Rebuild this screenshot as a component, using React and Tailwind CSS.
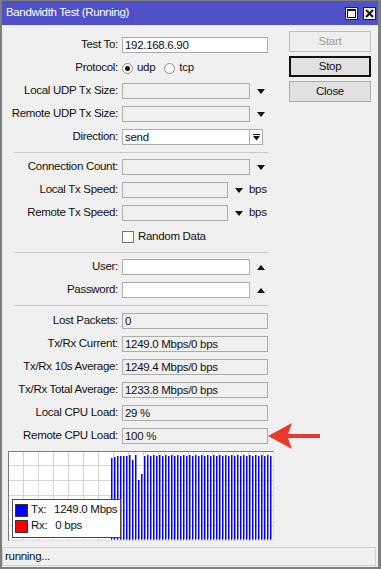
import React from 'react';

const Label = ({ children }) => (
  <div className="w-[116px] shrink-0 text-right">{children}</div>
);

const Row = ({ label, children }) => (
  <div className="flex h-[16px] items-center">
    <Label>{label}</Label>
    <div className="ml-[4px] flex h-full items-center">{children}</div>
  </div>
);

const Field = ({ w = 'w-[146px]', white, value }) => (
  <div
    className={`${w} h-[16px] border border-[#acacac] pl-[2px] leading-[14px] ${
      white ? 'bg-white' : 'bg-[#f0f0f0]'
    }`}
  >
    {value}
  </div>
);

const Down = ({ ml = 'ml-[7px]' }) => (
  <svg className={`${ml} shrink-0`} width="8" height="5" viewBox="0 0 8 5">
    <path d="M0 0H8L4 5Z" fill="#111" />
  </svg>
);

const Up = () => (
  <svg className="ml-[7px] shrink-0" width="8" height="5" viewBox="0 0 8 5">
    <path d="M0 5H8L4 0Z" fill="#111" />
  </svg>
);

const Separator = () => <div className="ml-[12px] h-px w-[254px] bg-[#c9c9c9]" />;

const Radio = ({ checked, label }) => (
  <div className="flex items-center">
    <div className="flex h-[11px] w-[11px] items-center justify-center rounded-full border border-[#8a8a8a] bg-white">
      {checked && <div className="h-[5px] w-[5px] rounded-full bg-[#111]" />}
    </div>
    <span className="ml-[4px]">{label}</span>
  </div>
);

// bar tops (px from chart top) for the first samples, rest near full scale
const tops = [6, 5, 4, 4, 4, 4, 3, 8, 3, 28, 22];

const Graph = () => {
  const bars = [];
  for (let i = 0; i < 54; i++) {
    const top = i < tops.length ? tops[i] : i % 2 ? 4 : 3;
    bars.push(<rect key={i} x={102 + 3 * i} y={top} width="1.5" height={87 - top} fill="#0000ff" />);
  }
  const vlines = [];
  for (let x = 14; x < 264; x += 15) vlines.push(<line key={'v' + x} x1={x + 0.5} y1="0" x2={x + 0.5} y2="88" stroke="#d4d4d4" />);
  const hlines = [];
  for (let y = 13; y < 88; y += 15) hlines.push(<line key={'h' + y} x1="0" y1={y + 0.5} x2="264" y2={y + 0.5} stroke="#d4d4d4" />);
  return (
    <div className="relative ml-[6px] mt-[7px] h-[90px] w-[266px] border-t border-l border-[#7a7a7a] border-r border-b border-r-[#dcdcdc] border-b-[#dcdcdc] bg-white">
      <svg width="264" height="88" viewBox="0 0 264 88" className="block">
        {vlines}
        {hlines}
        {bars}
        <line x1="102" y1="87.5" x2="264" y2="87.5" stroke="#ff0000" strokeDasharray="1 2" />
      </svg>
      <div className="absolute left-[3px] top-[47px] h-[39px] w-[109px] border border-[#4a4a4a] bg-white px-[2px] pt-[3px]">
        <div className="flex h-[14px] items-center">
          <div className="h-[13px] w-[13px] border border-[#333] bg-[#0000ff]" />
          <span className="ml-[3px]">Tx:</span>
          <span className="ml-[8px]">1249.0 Mbps</span>
        </div>
        <div className="mt-[2px] flex h-[14px] items-center">
          <div className="h-[13px] w-[13px] border border-[#333] bg-[#ff0000]" />
          <span className="ml-[3px]">Rx:</span>
          <span className="ml-[8px]">0 bps</span>
        </div>
      </div>
    </div>
  );
};

const Button = ({ children, variant }) => {
  const cls =
    variant === 'disabled'
      ? 'border border-[#bfbfbf] bg-[#efefef] text-[#9a9a9a]'
      : variant === 'focus'
      ? 'border-2 border-[#111] bg-[#e1e1e1] text-[#111]'
      : 'border border-[#adadad] bg-[#e1e1e1] text-[#111]';
  return (
    <div className={`flex h-[21px] w-[82px] items-center justify-center ${cls}`}>{children}</div>
  );
};

export default function App() {
  return (
    <div className="relative flex h-[569px] w-[381px] flex-col border-t border-l-2 border-b-2 border-r-[3px] border-[#7d7d7d] bg-[#f0f0f0] font-['Liberation_Sans',Arial,sans-serif] text-[11.5px] tracking-[-0.3px] text-[#111]">
      <div className="flex h-[24px] shrink-0 items-center bg-[#5050c9] pl-[4px] pr-[2px] text-white">
        <span className="text-[11.5px] tracking-[-0.35px]">Bandwidth Test (Running)</span>
        <div className="ml-auto flex gap-[5px]">
          <div className="flex h-[13px] w-[13px] items-center justify-center border border-[#222] bg-[#f4f4f4]">
            <div className="h-[9px] w-[9px] border border-t-2 border-[#111]" />
          </div>
          <div className="flex h-[13px] w-[13px] items-center justify-center border border-[#222] bg-[#f4f4f4]">
            <svg width="9" height="9" viewBox="0 0 9 9">
              <path d="M1 1L8 8M8 1L1 8" stroke="#111" strokeWidth="2" />
            </svg>
          </div>
        </div>
      </div>

      <div className="flex">
        <div className="flex w-[272px] flex-col pt-[12px]">
          <div className="flex flex-col gap-[7px]">
            <Row label="Test To:">
              <Field white value="192.168.6.90" />
            </Row>
            <Row label="Protocol:">
              <div className="flex items-center gap-[9px]">
                <Radio checked label="udp" />
                <Radio label="tcp" />
              </div>
            </Row>
            <Row label="Local UDP Tx Size:">
              <Field w="w-[128px]" />
              <Down />
            </Row>
            <Row label="Remote UDP Tx Size:">
              <Field w="w-[128px]" />
              <Down />
            </Row>
            <Row label="Direction:">
              <Field w="w-[128px]" white value="send" />
              <div className="flex h-[16px] w-[13px] flex-col items-center justify-center border border-l-0 border-[#acacac] bg-white">
                <svg width="7" height="7" viewBox="0 0 7 7">
                  <path d="M0 0.5H7" stroke="#111" />
                  <path d="M0 2H7L3.5 6.5Z" fill="#111" />
                </svg>
              </div>
            </Row>
          </div>

          <div className="mt-[7px] mb-[6px]">
            <Separator />
          </div>

          <div className="flex flex-col gap-[7px]">
            <Row label="Connection Count:">
              <Field w="w-[128px]" />
              <Down />
            </Row>
            <Row label="Local Tx Speed:">
              <Field w="w-[106px]" />
              <Down />
              <span className="ml-[6px]">bps</span>
            </Row>
            <Row label="Remote Tx Speed:">
              <Field w="w-[106px]" />
              <Down />
              <span className="ml-[6px]">bps</span>
            </Row>
            <Row label="">
              <div className="flex items-center pt-[2px]">
                <div className="h-[12px] w-[12px] border border-[#777] bg-white" />
                <span className="ml-[4px]">Random Data</span>
              </div>
            </Row>
          </div>

          <div className="mt-[8px] mb-[6px]">
            <Separator />
          </div>

          <div className="flex flex-col gap-[7px]">
            <Row label="User:">
              <Field w="w-[128px]" white />
              <Up />
            </Row>
            <Row label="Password:">
              <Field w="w-[128px]" white />
              <Up />
            </Row>
          </div>

          <div className="mt-[7px] mb-[7px]">
            <Separator />
          </div>

          <div className="flex flex-col gap-[7px]">
            <Row label="Lost Packets:">
              <Field value="0" />
            </Row>
            <Row label="Tx/Rx Current:">
              <Field value="1249.0 Mbps/0 bps" />
            </Row>
            <Row label="Tx/Rx 10s Average:">
              <Field value="1249.4 Mbps/0 bps" />
            </Row>
            <Row label="Tx/Rx Total Average:">
              <Field value="1233.8 Mbps/0 bps" />
            </Row>
            <Row label="Local CPU Load:">
              <Field value="29 %" />
            </Row>
            <Row label="Remote CPU Load:">
              <Field value="100 %" />
            </Row>
          </div>

          <Graph />
        </div>

        <div className="ml-[15px] flex flex-col gap-[4px] pt-[6px]">
          <Button variant="disabled">Start</Button>
          <Button variant="focus">Stop</Button>
          <Button>Close</Button>
        </div>
      </div>

      <div className="mt-[6px] mr-[2px] flex h-[19px] items-center border border-[#cfcfcf] pl-[2px]">
        running...
      </div>

      <svg
        className="pointer-events-none absolute left-[264px] top-[419px]"
        width="56"
        height="32"
        viewBox="0 0 56 32"
      >
        <path d="M2 16L26 3L22 14H54V18H22L26 29Z" fill="#e8392c" />
      </svg>
    </div>
  );
}
